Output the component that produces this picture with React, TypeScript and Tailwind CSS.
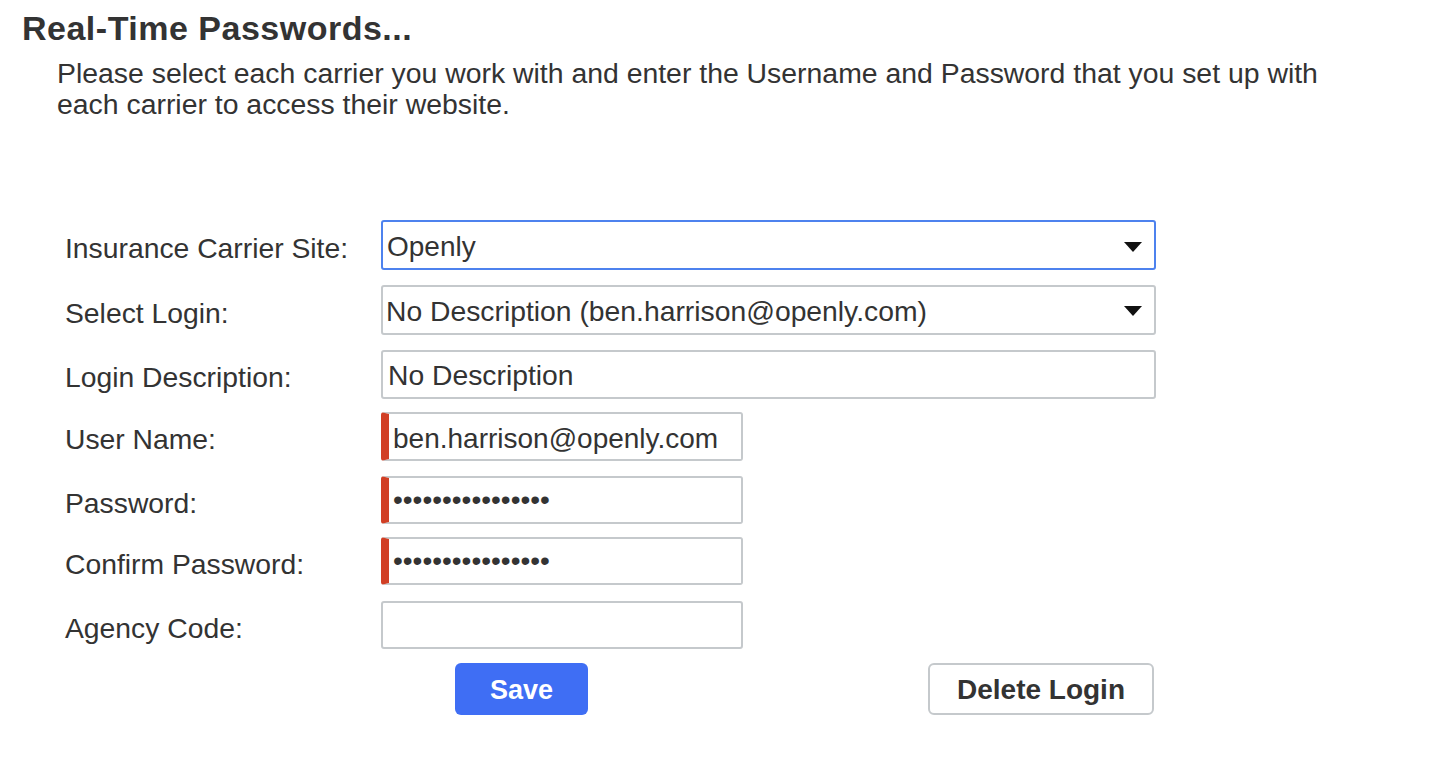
import React from 'react'

const font = "font-['Liberation_Sans',Arial,sans-serif]"

function Caret() {
  return (
    <svg width="18" height="10" viewBox="0 0 18 10" className="shrink-0">
      <path d="M0 0 H18 L9 10 Z" fill="#111" />
    </svg>
  )
}

interface RowProps {
  label: string;
  className?: string;
  children: React.ReactNode;
}

function Row({ label, className = '', children }: RowProps) {
  return (
    <div className={`flex items-center ${className}`}>
      <label className="w-[316px] shrink-0 pt-[6px] text-[28.3px] text-[#333]">{label}</label>
      {children}
    </div>
  )
}

export default function App() {
  return (
    <div className={`min-h-screen bg-white text-[#333] ${font}`}>
      <h1 className="pl-[22px] pt-[10px] text-[34px] font-bold leading-[36px] tracking-[0.5px] text-[#333]">
        Real-Time Passwords...
      </h1>
      <p className="ml-[57px] mt-[12px] w-[1300px] text-[28.4px] leading-[31px] text-[#333]">
        Please select each carrier you work with and enter the Username and Password that you set up with each carrier to access their website.
      </p>

      <form className="ml-[65px] mt-[100px] flex flex-col" onSubmit={e => e.preventDefault()}>
        <Row label="Insurance Carrier Site:" className="h-[50px]">
          <div className="flex h-[50px] w-[775px] items-center justify-between rounded-[3px] border-2 border-[#4d82ee] pl-[4px] pr-[12px] pt-[3px] text-[28px] text-[#333]">
            <span>Openly</span>
            <Caret />
          </div>
        </Row>
        <Row label="Select Login:" className="mt-[15px] h-[50px]">
          <div className="flex h-[50px] w-[775px] items-center justify-between rounded-[3px] border-2 border-[#c5c9cc] pl-[3px] pr-[12px] pt-[2px] text-[28.3px] text-[#333]">
            <span>No Description (ben.harrison@openly.com)</span>
            <Caret />
          </div>
        </Row>
        <Row label="Login Description:" className="mt-[15px] h-[49px]">
          <input
            readOnly
            value="No Description"
            className="h-[49px] w-[775px] rounded-[3px] border-2 border-[#c5c9cc] px-[5px] pt-[2px] text-[28.3px] text-[#333] outline-none"
          />
        </Row>
        <Row label="User Name:" className="mt-[13px] h-[49px]">
          <input
            readOnly
            value="ben.harrison@openly.com"
            className="h-[49px] w-[362px] rounded-[3px] border-2 border-l-[8px] border-[#c5c9cc] border-l-[#d13f25] px-[4px] pt-[4px] text-[28px] text-[#333] outline-none"
          />
        </Row>
        <Row label="Password:" className="mt-[15px] h-[48px]">
          <input
            readOnly
            type="password"
            value="abcdefghijklmnop"
            className="h-[48px] w-[362px] rounded-[3px] border-2 border-l-[8px] border-[#c5c9cc] border-l-[#d13f25] px-[4px] text-[28px] text-[#333] outline-none"
          />
        </Row>
        <Row label="Confirm Password:" className="mt-[13px] h-[48px]">
          <input
            readOnly
            type="password"
            value="abcdefghijklmnop"
            className="h-[48px] w-[362px] rounded-[3px] border-2 border-l-[8px] border-[#c5c9cc] border-l-[#d13f25] px-[4px] text-[28px] text-[#333] outline-none"
          />
        </Row>
        <Row label="Agency Code:" className="mt-[16px] h-[48px]">
          <input
            readOnly
            value=""
            className="h-[48px] w-[362px] rounded-[3px] border-2 border-[#c5c9cc] px-[5px] text-[28px] text-[#333] outline-none"
          />
        </Row>
        <div className="mt-[14px] flex h-[52px] items-center">
          <button
            type="submit"
            className="ml-[390px] h-[52px] w-[133px] rounded-[6px] bg-[#3f6ef4] pt-[2px] text-[27px] font-bold text-white"
          >
            Save
          </button>
          <button
            type="button"
            className="ml-[340px] h-[52px] w-[226px] rounded-[6px] border-2 border-[#c5c9cc] bg-white pt-[2px] text-[28px] font-bold text-[#333]"
          >
            Delete Login
          </button>
        </div>
      </form>
    </div>
  )
}
